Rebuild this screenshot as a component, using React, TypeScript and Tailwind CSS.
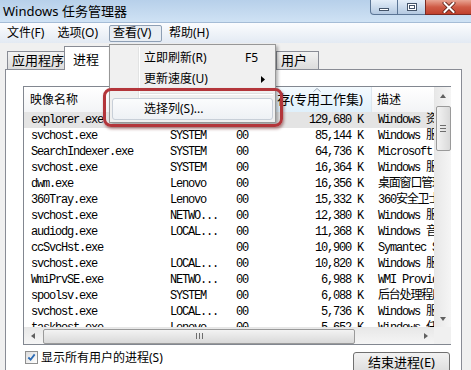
import React from 'react';

const ui = { fontFamily: '"Noto Sans", "Noto Sans CJK SC", sans-serif' };
const mono = { fontFamily: '"Liberation Mono", "Noto Sans CJK SC", monospace' };

type Row = { name: string; user: string; mem: string; desc: string };

const rows: Row[] = [
  { name: 'explorer.exe', user: '', mem: '129,680 K', desc: 'Windows 资源管理器' },
  { name: 'svchost.exe', user: 'SYSTEM', mem: '85,144 K', desc: 'Windows 服务主进程' },
  { name: 'SearchIndexer.exe', user: 'SYSTEM', mem: '64,736 K', desc: 'Microsoft Windows Search' },
  { name: 'svchost.exe', user: 'SYSTEM', mem: '16,364 K', desc: 'Windows 服务主进程' },
  { name: 'dwm.exe', user: 'Lenovo', mem: '16,356 K', desc: '桌面窗口管理器' },
  { name: '360Tray.exe', user: 'Lenovo', mem: '15,332 K', desc: '360安全卫士' },
  { name: 'svchost.exe', user: 'NETWO...', mem: '12,380 K', desc: 'Windows 服务主进程' },
  { name: 'audiodg.exe', user: 'LOCAL...', mem: '11,368 K', desc: 'Windows 音频设备' },
  { name: 'ccSvcHst.exe', user: '', mem: '10,900 K', desc: 'Symantec Service' },
  { name: 'svchost.exe', user: 'LOCAL...', mem: '10,820 K', desc: 'Windows 服务主进程' },
  { name: 'WmiPrvSE.exe', user: 'NETWO...', mem: '6,988 K', desc: 'WMI Provider Host' },
  { name: 'spoolsv.exe', user: 'SYSTEM', mem: '6,088 K', desc: '后台处理程序子系统' },
  { name: 'svchost.exe', user: 'LOCAL...', mem: '5,736 K', desc: 'Windows 服务主进程' },
  { name: 'taskhost.exe', user: 'Lenovo', mem: '5,652 K', desc: 'Windows 任务' },
];

function Tab({ label, w, active }: { label?: string; w: number; active?: boolean }) {
  return (
    <div
      style={{ width: w }}
      className={
        active
          ? 'relative z-10 -mb-px h-[24px] -ml-px -mr-px border border-b-0 border-[#898c95] bg-white pl-[8px] pt-[3px] text-[13px]'
          : 'h-[18px] border border-b-0 border-[#898c95] bg-gradient-to-b from-[#f2f2f2] to-[#dcdcdc] pl-[4px] text-[13px] leading-[17px]'
      }
    >
      {label}
    </div>
  );
}

function Arrow({ dir }: { dir: 'up' | 'down' | 'left' | 'right' }) {
  const pts = {
    up: '1,5 4,1 7,5',
    down: '1,1 4,5 7,1',
    left: '5,1 1,4 5,7',
    right: '1,1 5,4 1,7',
  }[dir];
  const vb = dir === 'up' || dir === 'down' ? '0 0 8 6' : '0 0 6 8';
  const wh = dir === 'up' || dir === 'down' ? 'w-[8px] h-[6px]' : 'w-[6px] h-[8px]';
  return (
    <svg viewBox={vb} className={wh}>
      <polygon points={pts} fill="#606060" />
    </svg>
  );
}

export default function App() {
  return (
    <div style={ui} className="relative flex h-[370px] w-[471px] flex-col overflow-hidden bg-[#f0f0f0] text-black">
      {/* title bar */}
      <div className="relative flex h-[22px] shrink-0 items-center bg-gradient-to-b from-[#b7d0ea] to-[#cfe2f4] pl-[3px]">
        <span className="text-[13px] leading-none">Windows 任务管理器</span>
        <div className="absolute right-0 top-0 flex h-[15px]">
          <div className="flex w-[28px] items-center justify-center rounded-bl-[4px] border border-t-0 border-[#5b7595] bg-gradient-to-b from-[#e4eef9] to-[#b4c9e1]">
            <div className="mt-[4px] h-[3px] w-[10px] border border-[#44546a] bg-white" />
          </div>
          <div className="flex w-[27px] items-center justify-center border-b border-[#5b7595] bg-gradient-to-b from-[#e4eef9] to-[#b4c9e1]">
            <div className="h-[8px] w-[10px] border border-[#44546a] bg-white p-[1px]">
              <div className="h-full w-full border border-[#44546a]" />
            </div>
          </div>
          <div className="flex w-[46px] items-center justify-center border-b border-l border-[#7a2a22] bg-gradient-to-b from-[#e8a493] via-[#cf5b46] to-[#c0402c]">
            <svg viewBox="0 0 14 12" className="h-[11px] w-[14px]">
              <path d="M2 1 L12 11 M12 1 L2 11" stroke="#5a1d14" strokeWidth="4" strokeLinecap="round" />
              <path d="M2 1 L12 11 M12 1 L2 11" stroke="#ffffff" strokeWidth="2.2" strokeLinecap="round" />
            </svg>
          </div>
        </div>
      </div>

      {/* menu bar */}
      <div className="flex h-[21px] shrink-0 items-center border-t border-[#a5bcd6] bg-gradient-to-b from-[#fbfcfe] to-[#e3eaf3] text-[12px]">
        <span className="ml-[6px] px-[1px]">文件(F)</span>
        <span className="ml-[11px] px-[1px]">选项(O)</span>
        <span className="ml-[10px] flex h-[17px] w-[53px] items-center rounded-[2px] border border-[#8e9fb4] bg-[#e8edf3] pl-[3px]">查看(V)</span>
        <span className="ml-[7px]">帮助(H)</span>
      </div>

      {/* tabs (服务 / 性能 / 联网 lie under the open menu) */}
      <div className="flex h-[26px] shrink-0 items-end pl-[7px]">
        <Tab label="应用程序" w={58} />
        <Tab label="进程" w={47} active />
        <Tab w={55} />
        <Tab w={55} />
        <Tab w={56} />
        <Tab label="用户" w={43} />
      </div>

      {/* tab page */}
      <div className="ml-[5px] w-[457px] flex-1 border border-[#898c95] bg-white pl-[17px] pt-[16px]">
        {/* list view */}
        <div className="grid w-[428px] grid-cols-[410px_17px] grid-rows-[240px_17px] border border-[#828790]">
          <div style={mono} className="overflow-hidden text-[12px] tracking-[-1.2px]">
            {/* header */}
            <div style={ui} className="flex h-[25px] text-[12px] tracking-normal">
              <div className="flex w-[141px] items-center border-r border-[#e5e5e5] bg-gradient-to-b from-white to-[#f3f4f6] pl-[6px]">映像名称</div>
              <div className="w-[63px] border-r border-[#e5e5e5] bg-gradient-to-b from-white to-[#f3f4f6]" />
              <div className="w-[34px] border-r border-[#e5e5e5] bg-gradient-to-b from-white to-[#f3f4f6]" />
              <div className="relative flex w-[110px] items-center justify-end border-r border-[#dde6ee] bg-gradient-to-b from-[#f4fafe] to-[#dff0fb] pr-[8px] text-[13px]">
                存(专用工作集)
                <svg viewBox="0 0 8 4" className="absolute left-[51px] top-[1px] h-[4px] w-[8px]">
                  <polyline points="0.5,3.5 4,0.5 7.5,3.5" fill="none" stroke="#97a5b5" strokeWidth="1" />
                </svg>
              </div>
              <div className="flex w-[62px] items-center bg-gradient-to-b from-white to-[#f3f4f6] pl-[5px]">描述</div>
            </div>
            {/* rows */}
            {rows.map((r, i) => (
              <div key={i} className={`flex h-[16px] items-center whitespace-nowrap ${i === 0 ? 'bg-[#e4e4e4]' : ''}`}>
                <div className="w-[141px] overflow-hidden pl-[7px]">{r.name}</div>
                <div className="w-[63px] overflow-hidden pl-[5px]">{r.user}</div>
                <div className="w-[34px] overflow-hidden pl-[8px]">{i === 0 ? '' : '00'}</div>
                <div className="w-[110px] overflow-hidden pr-[9px] text-right">{r.mem}</div>
                <div className="w-[62px] overflow-hidden pl-[6px]">{r.desc}</div>
              </div>
            ))}
          </div>

          {/* vertical scrollbar */}
          <div className="flex flex-col items-center border-l border-[#e6e6e6] bg-gradient-to-r from-[#e8e8e8] to-[#f5f5f5]">
            <div className="flex h-[17px] w-full items-center justify-center">
              <Arrow dir="up" />
            </div>
            <div className="mt-[2px] flex h-[45px] w-[15px] flex-col items-center justify-center gap-[2px] rounded-[2px] border border-[#9a9a9a] bg-gradient-to-r from-[#f3f3f3] to-[#d9d9d9]">
              <div className="h-px w-[6px] bg-[#6d6d6d]" />
              <div className="h-px w-[6px] bg-[#6d6d6d]" />
              <div className="h-px w-[6px] bg-[#6d6d6d]" />
            </div>
            <div className="flex-1" />
            <div className="flex h-[17px] w-full items-center justify-center">
              <Arrow dir="down" />
            </div>
          </div>

          {/* horizontal scrollbar */}
          <div className="flex items-center border-t border-[#e6e6e6] bg-gradient-to-b from-[#e8e8e8] to-[#f5f5f5]">
            <div className="flex h-full w-[17px] items-center justify-center">
              <Arrow dir="left" />
            </div>
            <div className="ml-[2px] flex h-[15px] w-[312px] items-center justify-center gap-[2px] rounded-[2px] border border-[#9a9a9a] bg-gradient-to-b from-[#f3f3f3] to-[#d9d9d9]">
              <div className="h-[6px] w-px bg-[#6d6d6d]" />
              <div className="h-[6px] w-px bg-[#6d6d6d]" />
              <div className="h-[6px] w-px bg-[#6d6d6d]" />
            </div>
            <div className="flex-1" />
            <div className="flex h-full w-[17px] items-center justify-center">
              <Arrow dir="right" />
            </div>
          </div>
          <div className="bg-[#f0f0f0]" />
        </div>

        {/* bottom controls */}
        <div className="mt-[5px] flex w-[428px] items-start">
          <div className="mt-[1px] flex items-center gap-[3px] pl-[2px]">
            <div className="flex h-[13px] w-[13px] items-center justify-center border border-[#8f8f8f] bg-gradient-to-br from-[#dcdcdc] to-white">
              <svg viewBox="0 0 10 10" className="h-[9px] w-[9px]">
                <path d="M1.5 5 L4 7.5 L8.5 1.5" fill="none" stroke="#2c6bb5" strokeWidth="2" />
              </svg>
            </div>
            <span className="text-[12px] leading-none">显示所有用户的进程(S)</span>
          </div>
          <div className="ml-auto mr-[1px] mt-[2px] flex h-[22px] w-[97px] items-center justify-center rounded-[3px] border border-[#707070] bg-gradient-to-b from-[#f2f2f2] to-[#dcdcdc] text-[13px]">
            结束进程(E)
          </div>
        </div>
      </div>

      {/* open 查看 menu */}
      <div className="absolute left-[109px] top-[44px] z-20 flex h-[79px] w-[167px] flex-col border border-[#979797] bg-[#f0f0f0] py-[2px] text-[12px] shadow-[2px_2px_3px_rgba(0,0,0,0.3)]">
        <div className="absolute bottom-[2px] left-[28px] top-[2px] w-[2px] border-l border-r border-l-[#e2e3e3] border-r-white" />
        <div className="relative flex h-[22px] items-center pl-[34px]">
          <span>立即刷新(R)</span>
          <span className="ml-auto mr-[17px]">F5</span>
        </div>
        <div className="relative flex h-[22px] items-center pl-[34px]">
          <span>更新速度(U)</span>
          <svg viewBox="0 0 4 7" className="ml-auto mr-[10px] h-[7px] w-[4px]">
            <polygon points="0,0 4,3.5 0,7" fill="#000" />
          </svg>
        </div>
        <div className="relative ml-[30px] mr-[2px] my-[3px] h-[2px] border-b border-t border-b-white border-t-[#e0e0e0]" />
        <div className="relative mx-[2px] flex h-[22px] items-center rounded-[3px] border border-[#c8cfd8] bg-gradient-to-b from-[#fbfcfd] to-[#eef1f5] pl-[31px]">
          <span>选择列(S)...</span>
        </div>
      </div>

      {/* red highlight */}
      <div className="pointer-events-none absolute left-[103px] top-[88px] z-30 h-[39px] w-[180px] rounded-[8px] border-[3px] border-[#b3353a] shadow-[1px_2px_3px_rgba(90,0,0,0.45)]" />
    </div>
  );
}
